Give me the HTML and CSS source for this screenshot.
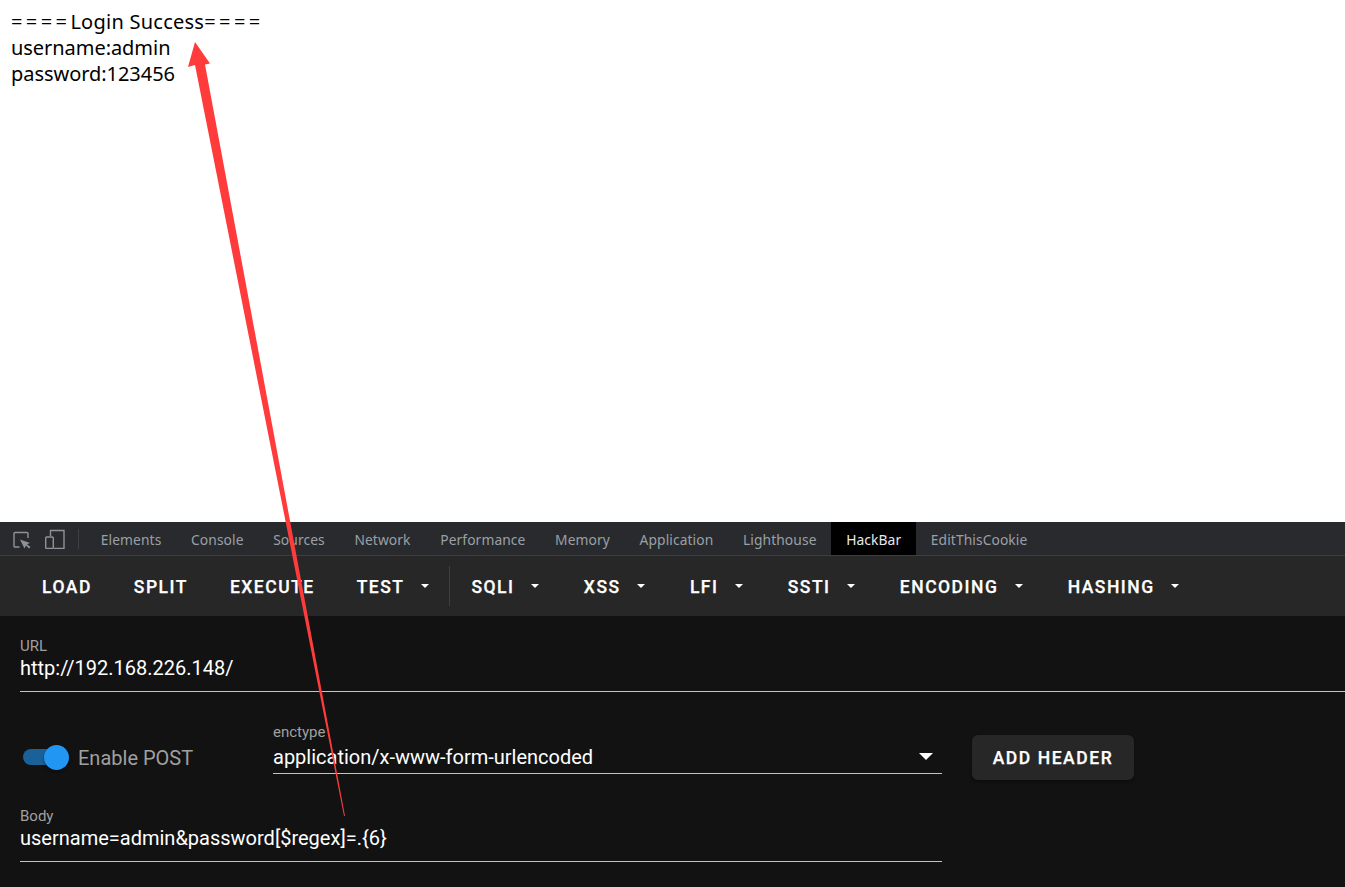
FILE: index.html
```html
<!DOCTYPE html>
<html lang="en">
<head>
<meta charset="utf-8">
<title>HackBar</title>
<link rel="stylesheet" href="styles.css">
</head>
<body>
<main class="page">
  <pre class="output"><span class="eq">====</span><span class="title">Login Success</span><span class="eq">====</span>
username:admin
password:123456</pre>
</main>
<section class="devtools">
  <nav class="tabs">
    <svg class="tool-icon" width="20" height="20" viewBox="0 0 20 20" fill="none" stroke="#8f9296" stroke-width="1.4"><path d="M7.500 18H3a1 1 0 0 1-1-1V4.500a1 1 0 0 1 1-1H15a1 1 0 0 1 1 1V9"/><path d="M8 10.500 L18 14 L15 15.300 L18.500 18 L17 19.500 L14 16.500 L12.500 19.500 Z" fill="#8f9296" stroke="none"/></svg>
    <svg class="tool-icon tool-device" width="20" height="20" viewBox="0 0 20 20" fill="none" stroke="#8f9296" stroke-width="1.400"><path d="M5.500 7V1.500H19V19.500H9"/><rect x="0.700" y="8" width="7.600" height="11.500" rx="1"/></svg>
    <span class="tool-sep"></span>
    <a class="tab">Elements</a><a class="tab">Console</a><a class="tab">Sources</a><a class="tab">Network</a><a class="tab">Performance</a><a class="tab">Memory</a><a class="tab">Application</a><a class="tab">Lighthouse</a><a class="tab active">HackBar</a><a class="tab">EditThisCookie</a>
  </nav>
  <div class="toolbar">
    <span class="btn">LOAD</span>
    <span class="btn">SPLIT</span>
    <span class="btn">EXECUTE</span>
    <span class="btn menu last-before-divider">TEST<i class="caret"></i></span>
    <span class="tool-divider"></span>
    <span class="btn menu">SQLI<i class="caret"></i></span>
    <span class="btn menu">XSS<i class="caret"></i></span>
    <span class="btn menu">LFI<i class="caret"></i></span>
    <span class="btn menu">SSTI<i class="caret"></i></span>
    <span class="btn menu">ENCODING<i class="caret"></i></span>
    <span class="btn menu">HASHING<i class="caret"></i></span>
  </div>
  <div class="panel">
    <div class="field url-field">
      <label class="field-label">URL</label>
      <div class="field-value">http://192.168.226.148/</div>
    </div>
    <div class="post-row">
      <div class="switch-wrap">
        <span class="switch"><span class="track"></span><span class="thumb"></span></span>
        <span class="switch-label">Enable POST</span>
      </div>
      <div class="field enctype-field">
        <label class="field-label">enctype</label>
        <div class="field-value select-value">application/x-www-form-urlencoded<i class="select-caret"></i></div>
      </div>
      <span class="add-header">ADD HEADER</span>
    </div>
    <div class="field body-field">
      <label class="field-label">Body</label>
      <div class="field-value">username=admin&amp;password[$regex]=.{6}</div>
    </div>
  </div>
</section>
<svg class="arrow" width="1345" height="887" viewBox="0 0 1345 887"><polygon points="345,816 344,816 195,65 188,67 195,42 210,63.500 205,64.500" fill="#ff3b3b"/></svg>
</body>
</html>
```
FILE: styles.css
```css
* { box-sizing: border-box; }
html, body { margin: 0; height: 100%; }
body { width: 1345px; height: 887px; overflow: hidden; background: #fff; display: flex; flex-direction: column; position: relative; }

.page { height: 522px; background: #fff; padding: 9px 0 0 11px; }
.output { margin: 0; font: 20px/26px "Noto Sans", "Open Sans", sans-serif; color: #000; letter-spacing: -0.05px; }
.eq { letter-spacing: 3.400px; }
.title { letter-spacing: 0.25px; }

.devtools { flex: 1; display: flex; flex-direction: column; min-height: 0; background: #121212; }

.tabs { height: 34px; flex: none; display: flex; align-items: center; background: #292a2d; border-bottom: 1px solid #3d3e41; padding-left: 12px; }
.tool-icon { flex: none; }
.tool-device { margin-left: 13px; }
.tool-sep { width: 1px; height: 20px; background: #3f4043; margin: 0 7px 0 13px; flex: none; }
.tab { height: 33px; padding: 1px 14.800px 0; display: flex; align-items: center; font: 13.800px "Noto Sans", "Open Sans", sans-serif; color: #9aa0a6; letter-spacing: 0.1px; }
.tab.active { background: #000; color: #e8eaed; }

.toolbar { height: 60px; flex: none; display: flex; align-items: center; background: #272727; padding: 2px 0 0 26px; }
.btn { display: flex; align-items: center; padding: 0 16px; margin-right: 10px; font: 500 17.500px Roboto, sans-serif; letter-spacing: 1.5px; color: #fff; white-space: nowrap; -webkit-text-stroke: 0.25px #fff; }
.btn.menu { padding-right: 0; margin-right: 11.300px; }
.btn.last-before-divider { margin-right: 3px; }
.caret { width: 0; height: 0; margin: -2px 17.500px 0 16.500px; border-left: 4.500px solid transparent; border-right: 4.500px solid transparent; border-top: 4.500px solid #fff; }
.tool-divider { width: 1px; height: 40px; margin: -2px 5px 0 0; background: #3f3f3f; flex: none; }

.panel { flex: 1; padding: 0 0 0 20px; background: #121212; color: #fff; font-family: Roboto, sans-serif; }
.field-label { display: block; font-size: 15px; line-height: 16px; color: #a0a0a0; }
.field-value { font-size: 20px; line-height: 28px; color: #fff; border-bottom: 1px solid #c4c4c4; }
.url-field { padding-top: 22px; height: 76px; }
.url-field .field-value { padding-bottom: 9px; height: 38px; margin-top: 0; }
.post-row { display: flex; align-items: flex-start; margin-top: 0; height: 116px; }
.switch-wrap { display: flex; align-items: center; width: 253px; padding-top: 53px; }
.switch { position: relative; width: 50px; height: 26px; flex: none; margin-left: 1px; margin-top: -1px; }
.track { position: absolute; left: 2px; top: 5px; width: 44px; height: 16px; border-radius: 8px; background: #1a6199; }
.thumb { position: absolute; left: 23px; top: 1px; width: 25px; height: 25px; border-radius: 50%; background: #2196f3; box-shadow: 0 2px 3px rgba(0,0,0,.4); }
.switch-label { font-size: 20px; color: #a0a0a0; margin-left: 7px; white-space: nowrap; }
.enctype-field { width: 669px; padding-top: 32px; }
.select-value { display: flex; align-items: center; justify-content: space-between; height: 34px; padding-right: 9px; }
.select-caret { width: 0; height: 0; border-left: 7px solid transparent; border-right: 7px solid transparent; border-top: 7px solid #fff; }
.add-header { margin: 43px 0 0 30px; width: 162px; height: 45px; display: flex; align-items: center; justify-content: center; background: #272727; border-radius: 6px; font-weight: 500; font-size: 17.500px; letter-spacing: 1.550px; color: #fff; box-shadow: 0 2px 3px rgba(0,0,0,.3); -webkit-text-stroke: 0.25px #fff; }
.body-field { width: 922px; }
.body-field .field-value { height: 38px; padding-top: 0; }

.arrow { position: absolute; left: 0; top: 0; pointer-events: none; }
```
